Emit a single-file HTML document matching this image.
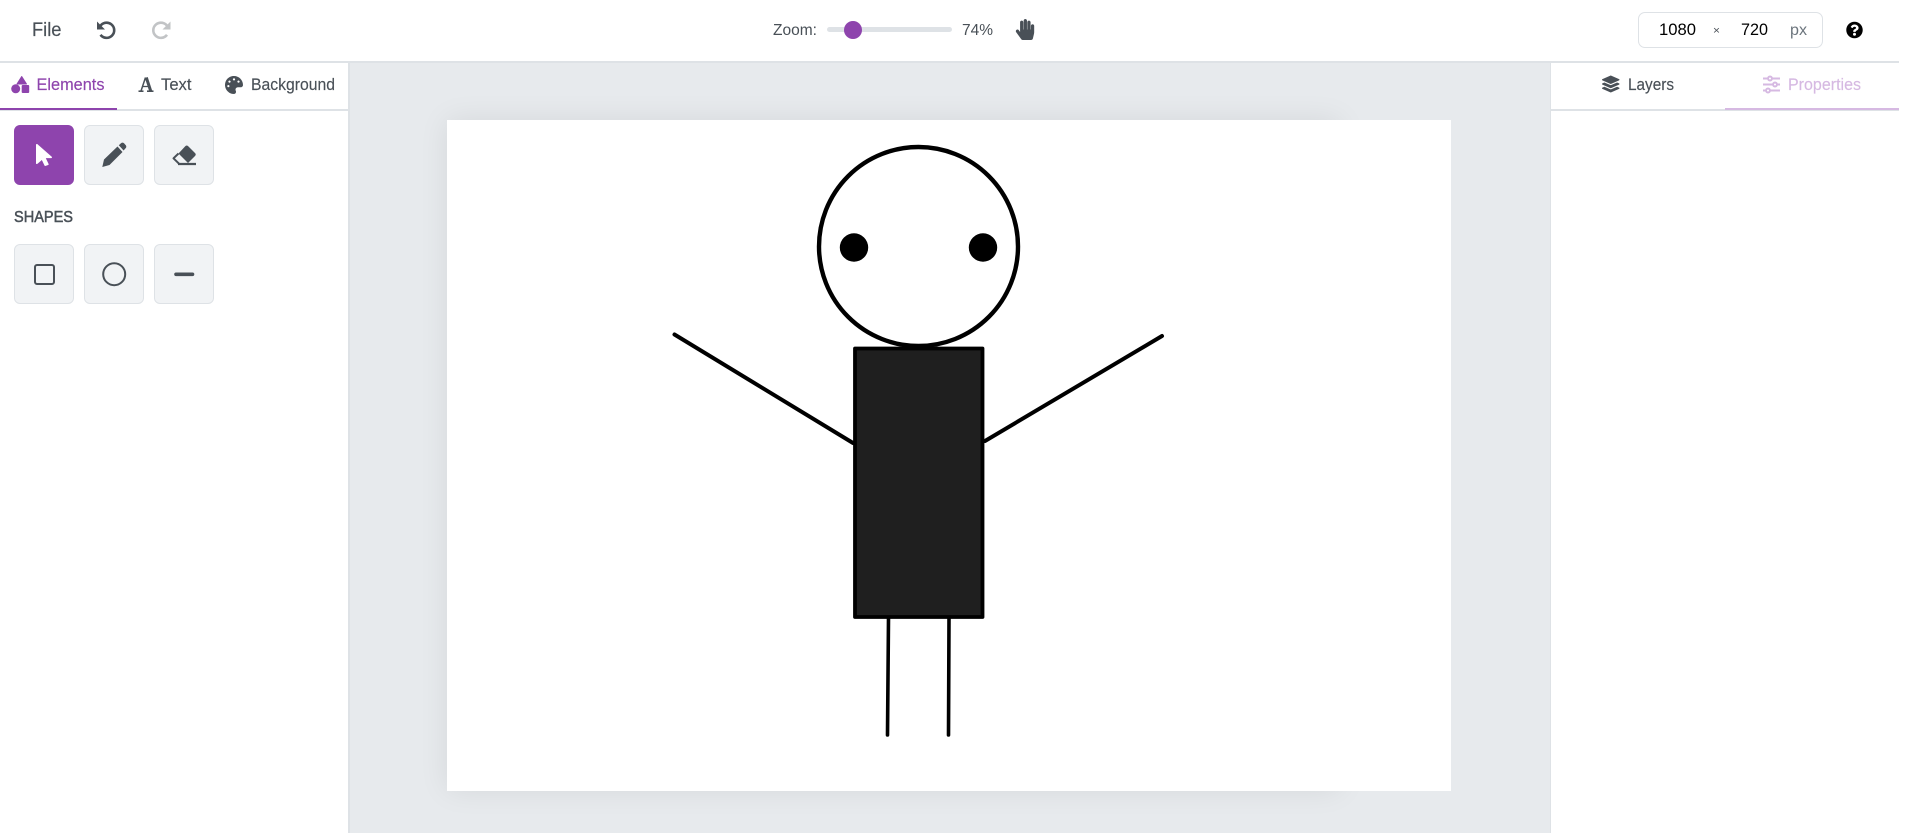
<!DOCTYPE html>
<html lang="en"><head><meta charset="utf-8"><title>Editor</title>
<style>
html,body{margin:0;padding:0;width:1907px;height:833px;overflow:hidden;background:#fff;font-family:"Liberation Sans",sans-serif}
.a{position:absolute;box-sizing:border-box}
.btn{width:60px;height:60px;background:#f1f3f5;border:1px solid #dee2e6;border-radius:6px}
svg{position:absolute;overflow:visible}
</style></head><body>
<div class="a" style="left:348px;top:62px;width:1203px;height:771px;background:#e7eaed"></div>
<div class="a" style="left:0;top:61px;width:1899px;height:1.5px;background:#dee2e6"></div>
<div class="a" style="left:348px;top:62px;width:1.5px;height:771px;background:#dee2e6"></div>
<div class="a" style="left:1549.5px;top:62px;width:1.5px;height:771px;background:#dee2e6"></div>
<div class="a" style="left:0;top:109px;width:348px;height:1.5px;background:#dee2e6"></div>
<div class="a" style="left:0;top:107.5px;width:117px;height:2.5px;background:#8e44ad"></div>
<div class="a" style="left:1551px;top:109px;width:348px;height:1.5px;background:#dee2e6"></div>
<div class="a" style="left:1725px;top:107.5px;width:174px;height:2.5px;background:#d6b9e2"></div>

<div class="a btn" style="left:14px;top:125px;background:#8e44ad;border-color:#8e44ad"></div>
<div class="a btn" style="left:84px;top:125px"></div>
<div class="a btn" style="left:154px;top:125px"></div>
<div class="a btn" style="left:14px;top:244px"></div>
<div class="a btn" style="left:84px;top:244px"></div>
<div class="a btn" style="left:154px;top:244px"></div>

<div class="a" style="left:447px;top:120px;width:893px;height:670px;box-shadow:0 0 28px rgba(0,0,0,.08)"></div>
<div class="a" style="left:447px;top:120px;width:1004px;height:671px;background:#fff"></div>

<!-- slider -->
<div class="a" style="left:827px;top:27px;width:125px;height:5px;border-radius:3px;background:#dee2e6"></div>
<div class="a" style="left:844px;top:21px;width:18px;height:18px;border-radius:50%;background:#8e44ad"></div>
<!-- size box -->
<div class="a" style="left:1638px;top:12px;width:185px;height:36px;border:1px solid #dee2e6;border-radius:7px"></div>

<svg width="1907" height="833" viewBox="0 0 1907 833" style="left:0;top:0">
<!-- figure -->
<g fill="none" stroke="#000" stroke-linecap="round" stroke-linejoin="round">
<circle cx="918.5" cy="246.5" r="99.5" stroke-width="4.4" fill="#fff"/>
<circle cx="854" cy="247.5" r="14.2" fill="#000" stroke="none"/>
<circle cx="983" cy="247.5" r="14.2" fill="#000" stroke="none"/>
<line x1="674.5" y1="334.5" x2="853" y2="443" stroke-width="4"/>
<line x1="1162" y1="336" x2="985" y2="441" stroke-width="4"/>
<rect x="855" y="348.5" width="127.5" height="268.5" fill="#1f1f1f" stroke-width="3.8"/>
<line x1="888.5" y1="618" x2="887.5" y2="735" stroke-width="3.6"/>
<line x1="949" y1="618" x2="948.5" y2="735" stroke-width="3.6"/>
</g>

<!-- text -->
<g fill="#495057" font-family="'Liberation Sans',sans-serif" stroke-width=".15">
<text x="32" y="36" font-size="19" textLength="29.5" lengthAdjust="spacingAndGlyphs" stroke="#495057">File</text>
<text x="36.5" y="90" font-size="17" fill="#8e44ad" stroke="#8e44ad" textLength="68" lengthAdjust="spacingAndGlyphs">Elements</text>
<text x="161" y="90" font-size="17" stroke="#495057" textLength="30.5" lengthAdjust="spacingAndGlyphs">Text</text>
<text x="251" y="90" font-size="17" stroke="#495057" textLength="84" lengthAdjust="spacingAndGlyphs">Background</text>
<text x="14" y="222" font-size="15.5" stroke="#495057" stroke-width=".5" textLength="59" lengthAdjust="spacingAndGlyphs">SHAPES</text>
<text x="773" y="35" font-size="15.5" textLength="44" lengthAdjust="spacingAndGlyphs">Zoom:</text>
<text x="962" y="35" font-size="15.5" textLength="31" lengthAdjust="spacingAndGlyphs">74%</text>
<text x="1659" y="35" font-size="16.5" fill="#000" textLength="37" lengthAdjust="spacingAndGlyphs">1080</text>
<text x="1713" y="34" font-size="11" fill="#495057" textLength="7" lengthAdjust="spacingAndGlyphs">×</text>
<text x="1741" y="35" font-size="16.5" fill="#000" textLength="27" lengthAdjust="spacingAndGlyphs">720</text>
<text x="1790" y="35" font-size="16" fill="#6c757d" textLength="17" lengthAdjust="spacingAndGlyphs">px</text>
<text x="1628" y="90" font-size="17" stroke="#495057" textLength="46" lengthAdjust="spacingAndGlyphs">Layers</text>
<text x="1788" y="90" font-size="17" fill="#d6b9e2" stroke="#d6b9e2" textLength="73" lengthAdjust="spacingAndGlyphs">Properties</text>
</g>

<!-- undo / redo -->
<g>
<path d="M97 21.5V29.5H105Z" fill="#495057"/>
<path d="M100 26.5A7.6 7.6 0 1 1 100.5 34.8" fill="none" stroke="#495057" stroke-width="2.6"/>
</g>
<g transform="translate(267.5 0) scale(-1 1)">
<path d="M97 21.5V29.5H105Z" fill="#c2c4c6"/>
<path d="M100 26.5A7.6 7.6 0 1 1 100.5 34.8" fill="none" stroke="#c2c4c6" stroke-width="2.6"/>
</g>

<!-- shapes tab icon -->
<g fill="#8e44ad">
<path d="M21.7 76.5L26.5 84H17Z" stroke="#8e44ad" stroke-width="1" stroke-linejoin="round"/>
<circle cx="15.7" cy="88.8" r="4.5"/>
<rect x="21.7" y="85" width="7.5" height="8" rx="1"/>
</g>
<!-- font icon -->
<g stroke="#495057" fill="none">
<line x1="145.5" y1="77.5" x2="141" y2="91" stroke-width="1.5"/>
<line x1="146.3" y1="77.5" x2="150.7" y2="91" stroke-width="3"/>
<line x1="142.5" y1="86.5" x2="149.5" y2="86.5" stroke-width="1.3"/>
<line x1="138.5" y1="91.2" x2="143.5" y2="91.2" stroke-width="1.6"/>
<line x1="147" y1="91.2" x2="153.5" y2="91.2" stroke-width="1.6"/>
</g>
<!-- palette -->
<svg x="225" y="76" width="18" height="18" viewBox="0 0 512 512"><path fill="#495057" d="M204.3 5C104.9 24.4 24.8 104.3 5.2 203.4c-37 187 131.7 326.4 258.8 306.7 41.2-6.4 61.4-54.6 42.5-91.7-23.1-45.4 9.9-98.4 60.9-98.4h79.7c35.8 0 64.8-29.6 64.9-65.3C511.5 97.1 368.1-26.9 204.3 5zM96 320c-17.7 0-32-14.3-32-32s14.3-32 32-32 32 14.3 32 32-14.3 32-32 32zm32-128c-17.7 0-32-14.3-32-32s14.3-32 32-32 32 14.3 32 32-14.3 32-32 32zm128-64c-17.7 0-32-14.3-32-32s14.3-32 32-32 32 14.3 32 32-14.3 32-32 32zm128 64c-17.7 0-32-14.3-32-32s14.3-32 32-32 32 14.3 32 32-14.3 32-32 32z"/></svg>
<!-- pointer -->
<svg x="36" y="144" width="16" height="22" viewBox="0 0 320 512" preserveAspectRatio="none"><path fill="#fff" d="M302.189 329.126H196.105l55.831 135.993c3.889 9.428-.555 19.999-9.444 23.999l-49.165 21.427c-9.165 4-19.443-.571-23.332-9.714l-53.053-129.136-86.664 89.138C18.729 472.71 0 463.554 0 447.977V18.299C0 1.899 19.921-6.096 30.277 5.443l284.412 292.542c11.472 11.179 3.007 31.141-12.5 31.141z"/></svg>
<!-- pencil -->
<path fill="#495057" d="M102.3 167L104 159.5L117.5 146.5L122.5 152L109.5 165Z"/>
<path fill="#495057" d="M118.8 145.3L121 143.2Q122.5 142 124 143.2L125.8 145.2Q126.8 146.8 125.8 148L123.6 150.5Z"/>
<!-- eraser -->
<path fill="#495057" d="M185 146.5Q186.7 144.6 188.5 146.5L195 153Q196.5 154.5 195 156L188 163L178.5 153.5Z"/>
<path fill="none" stroke="#495057" stroke-width="2" stroke-linejoin="round" d="M178.5 153.5L173.5 158.3L179 163.7"/>
<line x1="178" y1="164" x2="196" y2="164" stroke="#495057" stroke-width="2.2"/>
<!-- shape icons -->
<rect x="35" y="265" width="19" height="19" rx="2" fill="none" stroke="#495057" stroke-width="2"/>
<circle cx="114.2" cy="274.2" r="11" fill="none" stroke="#495057" stroke-width="2"/>
<line x1="176" y1="274.3" x2="192.5" y2="274.3" stroke="#495057" stroke-width="3.6" stroke-linecap="round"/>
<!-- hand -->
<svg x="1015" y="19" width="20" height="21" viewBox="0 0 448 512"><path fill="#495057" d="M408.781 128.007C386.356 127.578 368 146.36 368 168.79V256h-8V79.79c0-22.43-18.356-41.212-40.781-40.783C297.488 39.423 280 57.169 280 79v177h-8V40.79C272 18.36 253.644-.422 231.219.007 209.488.423 192 18.169 192 40v216h-8V80.79c0-22.43-18.356-41.212-40.781-40.783C121.488 40.423 104 58.169 104 80v235.992l-31.648-43.519c-12.993-17.866-38.009-21.817-55.877-8.823-17.865 12.994-21.815 38.01-8.822 55.877l125.601 172.705A48 48 0 0 0 172.073 512h197.59c22.274 0 41.622-15.324 46.724-37.006l26.508-112.66a192.011 192.011 0 0 0 5.104-43.975V168c.001-21.831-17.487-39.577-39.218-39.993z"/></svg>
<!-- help -->
<svg x="1846" y="21.5" width="17" height="17" viewBox="0 0 512 512"><path fill="#000" d="M504 256c0 136.997-111.043 248-248 248S8 392.997 8 256C8 119.083 119.043 8 256 8s248 111.083 248 248zM262.655 90c-54.497 0-89.255 22.957-116.549 63.758-3.536 5.286-2.353 12.415 2.715 16.258l34.699 26.31c5.205 3.947 12.621 3.008 16.665-2.122 17.864-22.658 30.113-35.797 57.303-35.797 20.429 0 45.698 13.148 45.698 32.958 0 14.976-12.363 22.667-32.534 33.976C247.128 238.528 216 254.941 216 296v4c0 6.627 5.373 12 12 12h56c6.627 0 12-5.373 12-12v-1.333c0-28.462 83.186-29.647 83.186-106.667 0-58.002-60.165-102-116.531-102zM256 338c-25.365 0-46 20.635-46 46 0 25.364 20.635 46 46 46s46-20.636 46-46c0-25.365-20.635-46-46-46z"/></svg>
<!-- layers -->
<svg x="1602" y="75.5" width="17.5" height="17" viewBox="0 0 512 512" preserveAspectRatio="none"><path fill="#495057" d="M12.41 148.02l232.94 105.67c6.8 3.09 14.49 3.09 21.29 0l232.94-105.67c16.55-7.51 16.55-32.52 0-40.03L266.65 2.31a25.607 25.607 0 0 0-21.29 0L12.41 107.98c-16.55 7.51-16.55 32.53 0 40.04zm487.18 88.28l-58.09-26.33-161.64 73.27c-7.56 3.43-15.59 5.17-23.86 5.17s-16.29-1.74-23.86-5.17L70.51 209.97l-58.1 26.33c-16.55 7.5-16.55 32.5 0 40l232.94 105.59c6.8 3.08 14.49 3.08 21.29 0L499.59 276.3c16.55-7.5 16.55-32.5 0-40zm0 127.8l-57.87-26.23-161.86 73.37c-7.56 3.43-15.59 5.17-23.86 5.17s-16.29-1.74-23.86-5.17L70.29 337.87 12.41 364.1c-16.55 7.5-16.55 32.5 0 40l232.94 105.59c6.8 3.08 14.49 3.08 21.29 0L499.59 404.1c16.55-7.5 16.55-32.5 0-40z"/></svg>
<!-- sliders -->
<g stroke="#d6b9e2" stroke-width="1.9" fill="#fff">
<line x1="1763" y1="78.5" x2="1780" y2="78.5"/><line x1="1763" y1="84.5" x2="1780" y2="84.5"/><line x1="1763" y1="90.5" x2="1780" y2="90.5"/>
<circle cx="1770" cy="78.5" r="2"/><circle cx="1775" cy="84.5" r="2"/><circle cx="1768" cy="90.5" r="2"/>
</g>
</svg>
</body></html>
